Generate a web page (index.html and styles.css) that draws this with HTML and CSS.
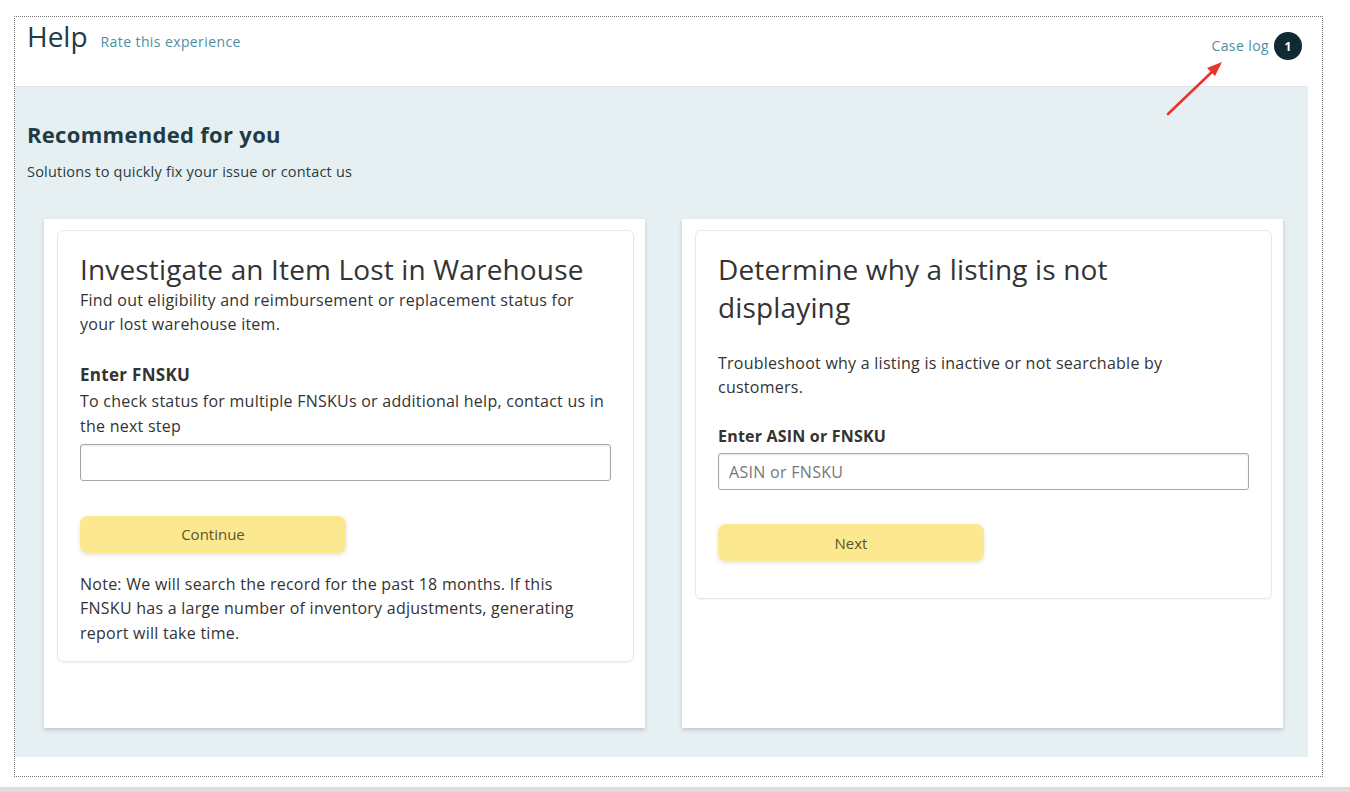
FILE: index.html
```html
<!DOCTYPE html>
<html lang="en">
<head>
    <meta charset="UTF-8">
    <meta name="viewport" content="width=device-width, initial-scale=1.0">
    <title>Help</title>
    <link rel="stylesheet" href="styles.css">
</head>
<body>
    <div class="frame">
        <header class="help-header">
            <div class="header-left">
                <h1>Help</h1>
                <a href="#" class="rate-link">Rate this experience</a>
            </div>
            <div class="header-right">
                <a href="#" class="case-link">Case log</a>
                <span class="badge">1</span>
            </div>
            <svg class="arrow" width="70" height="70" viewBox="0 0 70 70">
                <line x1="8" y1="60" x2="55" y2="15" stroke="#e8342a" stroke-width="2.6" stroke-linecap="round"/>
                <polygon points="62,8 47,14 55,22" fill="#e8342a"/>
            </svg>
        </header>

        <main class="panel">
            <h2>Recommended for you</h2>
            <p class="subtitle">Solutions to quickly fix your issue or contact us</p>

            <div class="cards">
                <div class="card">
                    <div class="card-inner">
                        <h3>Investigate an Item Lost in Warehouse</h3>
                        <p class="desc">Find out eligibility and reimbursement or replacement status for your lost warehouse item.</p>
                        <label class="field-label" for="fnsku">Enter FNSKU</label>
                        <p class="field-help">To check status for multiple FNSKUs or additional help, contact us in the next step</p>
                        <input type="text" id="fnsku" class="text-input">
                        <button class="btn">Continue</button>
                        <p class="note">Note: We will search the record for the past 18 months. If this FNSKU has a large number of inventory adjustments, generating report will take time.</p>
                    </div>
                </div>

                <div class="card">
                    <div class="card-inner short">
                        <h3 class="two-line">Determine why a listing is not displaying</h3>
                        <p class="desc">Troubleshoot why a listing is inactive or not searchable by customers.</p>
                        <label class="field-label small" for="asin">Enter ASIN or FNSKU</label>
                        <input type="text" id="asin" class="text-input" placeholder="ASIN or FNSKU">
                        <button class="btn">Next</button>
                    </div>
                </div>
            </div>
        </main>
    </div>
    <div class="bottom-bar"></div>
</body>
</html>
```

FILE: styles.css
```css
body {
    margin: 0;
    padding: 0;
    background-color: #fff;
    font-family: 'Open Sans', sans-serif;
    color: #333;
}
.frame {
    margin: 16px 0 0 14px;
    width: 1307px;
    height: 759px;
    border: 1px dotted #777;
}
.help-header {
    position: relative;
    height: 69px;
    display: flex;
    justify-content: space-between;
    align-items: flex-start;
    margin-right: 14px;
    border-bottom: 1px solid #e3e6e6;
}
.header-left {
    display: flex;
    align-items: baseline;
    gap: 13px;
    padding: 0 0 0 12px;
}
h1 {
    margin: 0;
    font-size: 28px;
    font-weight: 400;
    line-height: 38px;
    color: #1f3b46;
}
.rate-link, .case-link {
    color: #4d8fa2;
    text-decoration: none;
    font-size: 14px;
    letter-spacing: 0.4px;
}
.header-right {
    display: flex;
    align-items: center;
    gap: 5px;
    padding: 15px 6px 0 0;
}
.case-link {
    margin-top: -2px;
}
.badge {
    width: 28px;
    height: 28px;
    border-radius: 50%;
    background-color: #0f2a33;
    color: #fff;
    font-size: 12px;
    font-weight: 700;
    display: flex;
    align-items: center;
    justify-content: center;
}
.arrow {
    position: absolute;
    left: 1145px;
    top: 37px;
}
.panel {
    background-color: #e6f0f2;
    height: 670px;
    margin-right: 14px;
    padding: 32px 25px 0 12px;
    box-sizing: border-box;
}
h2 {
    margin: 0;
    font-size: 22px;
    font-weight: 700;
    letter-spacing: 0.3px;
    line-height: 30px;
    color: #1f3b46;
}
.subtitle {
    margin: 13px 0 0;
    font-size: 14.5px;
    letter-spacing: 0.2px;
    line-height: 20px;
    color: #2b3a40;
}
.cards {
    display: grid;
    grid-template-columns: 601px 601px;
    gap: 37px;
    margin: 37px 0 0 17px;
    height: 509px;
}
.card {
    background-color: #fff;
    box-shadow: 0 2px 4px rgba(0, 0, 0, 0.18);
    padding: 11px 11px 0 13px;
}
.card-inner {
    border: 1px solid #e7e9e9;
    border-radius: 6px;
    padding: 19px 22px 16px 22px;
    box-shadow: 0 1px 2px rgba(0, 0, 0, 0.05);
}
.card-inner.short {
    padding-bottom: 37px;
}
h3 {
    max-width: 512px;
    margin: 0;
    font-size: 28px;
    font-weight: 400;
    letter-spacing: 0.15px;
    line-height: 38px;
    color: #333;
}
h3.two-line {
    margin-bottom: 25px;
}
.desc, .field-help, .note {
    font-size: 16px;
    letter-spacing: 0.25px;
}
.desc {
    margin: 0;
    line-height: 24px;
}
.field-label {
    display: block;
    margin-top: 27px;
    font-size: 17px;
    font-weight: 700;
    letter-spacing: 0.3px;
    line-height: 24px;
}
.field-label.small {
    font-size: 16px;
    letter-spacing: 0.2px;
    margin-top: 25px;
}
.field-help {
    margin: 1.5px 0 0;
    line-height: 25px;
}
.text-input {
    display: block;
    width: 531px;
    height: 37px;
    margin-top: 5px;
    box-sizing: border-box;
    border: 1px solid #a6a6a6;
    border-radius: 3px;
    padding: 0 10px;
    font-family: inherit;
    font-size: 16px;
    letter-spacing: 0.3px;
    box-shadow: inset 0 1px 2px rgba(0, 0, 0, 0.1);
}
.text-input::placeholder {
    color: #777;
}
.btn {
    display: block;
    width: 266px;
    height: 37px;
    margin-top: 35px;
    border: none;
    border-radius: 8px;
    background-color: #fce98f;
    color: #5a5530;
    font-family: inherit;
    font-size: 15px;
    box-shadow: 0 2px 4px rgba(0, 0, 0, 0.12);
}
.card-inner.short .btn {
    margin-top: 34px;
}
.note {
    max-width: 505px;
    margin: 19px 0 0;
    line-height: 24.5px;
}
.bottom-bar {
    margin-top: 10px;
    height: 6px;
    background-color: #ddd;
}
```
